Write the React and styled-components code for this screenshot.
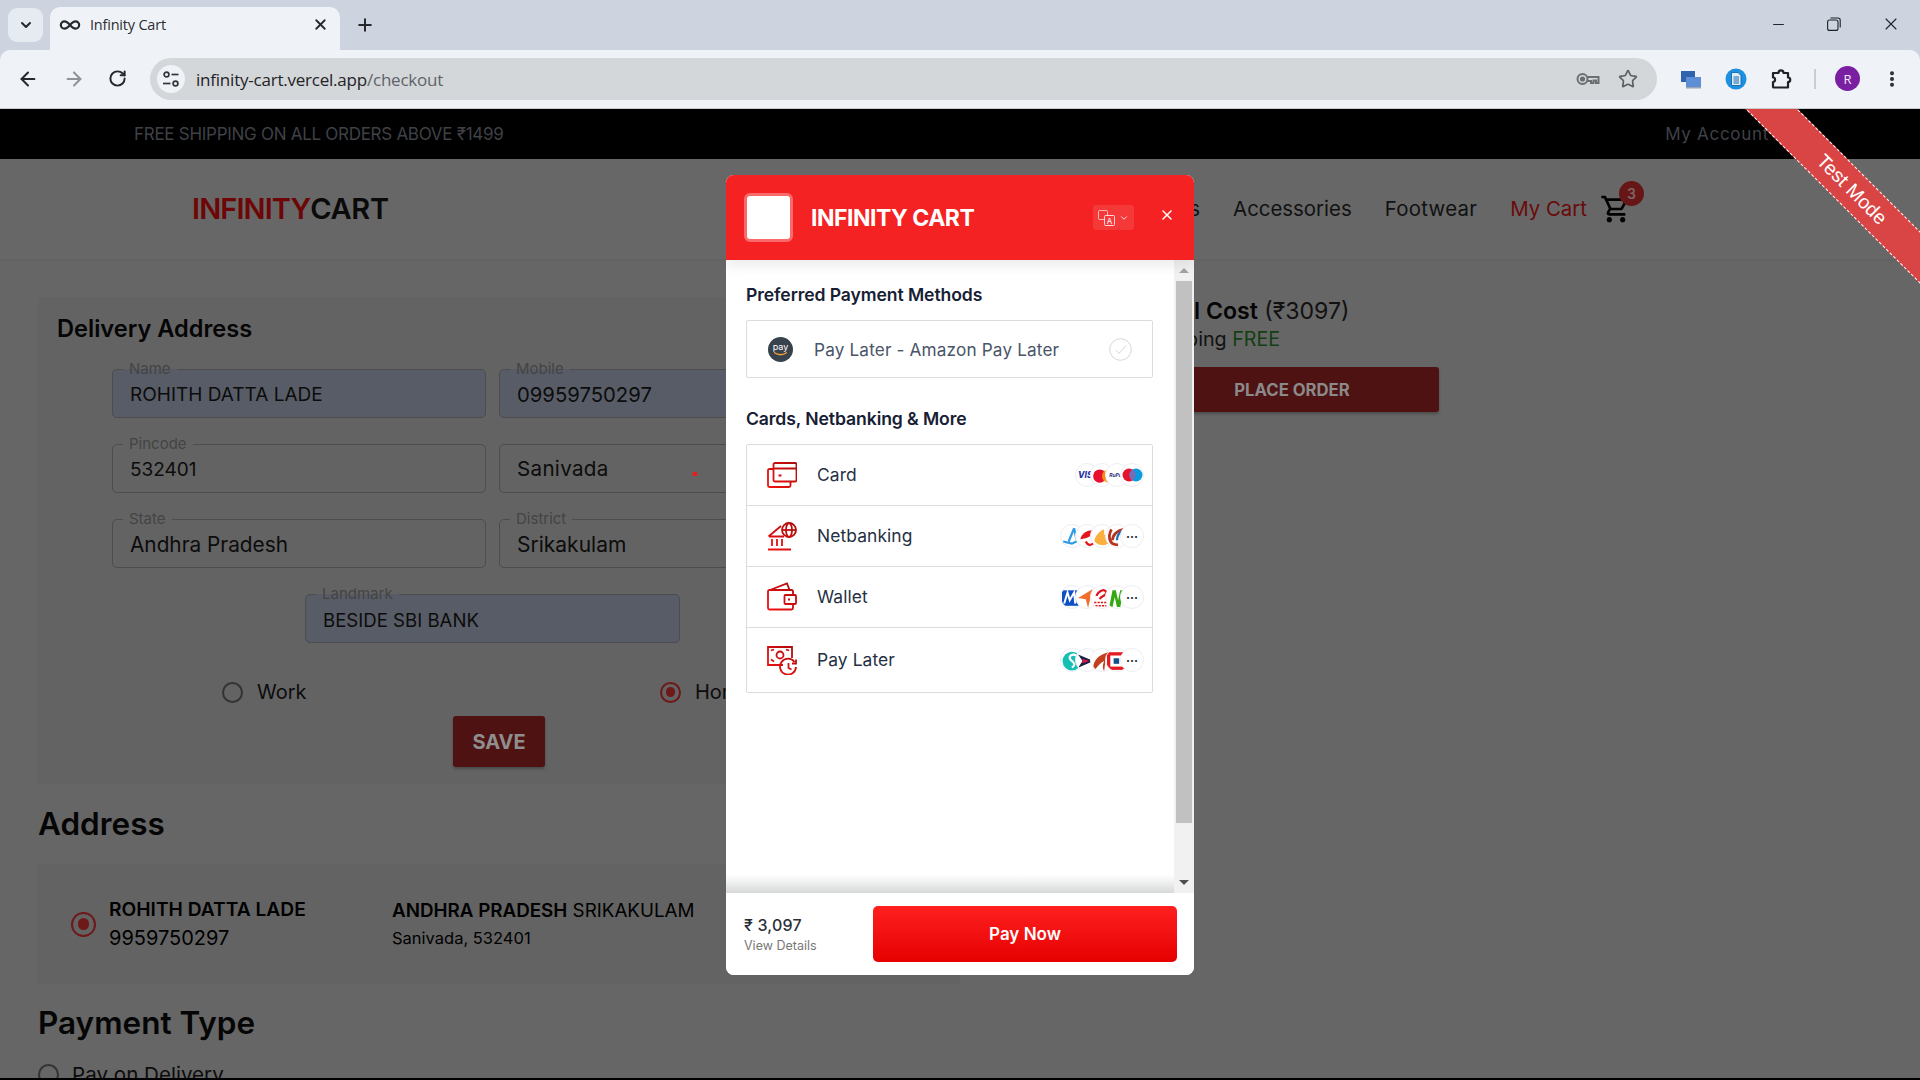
import React from 'react';
import styled, { createGlobalStyle } from 'styled-components';
import { ArrowLeft, ArrowRight, ChevronDown, Infinity as InfinityIcon, Minus, MoreVertical, Plus, RotateCw, Star, X } from 'lucide-react';
import { MdOutlineShoppingCart } from 'react-icons/md';

const GlobalStyle = createGlobalStyle`
    html, body {
        margin: 0;
        padding: 0;
        height: 1080px;
        overflow: hidden;
        background: #666;
        font-family: "Inter", "Liberation Sans", sans-serif;
    }
    * {
        box-sizing: border-box;
    }
`;

const PAGE_FONT = `"Inter", "Noto Sans", sans-serif`;
const CHROME_FONT = `"Open Sans", "Noto Sans", sans-serif`;

/* ---------- browser chrome ---------- */

const TabIcon = () => <InfinityIcon size={22} strokeWidth={2.4} color="#26282c" />;

const KeyIcon = () => (
    <svg width="24" height="14" viewBox="0 0 24 14" fill="none" stroke="#6b6e72" strokeWidth="2">
        <circle cx="6.5" cy="7" r="5" />
        <circle cx="6.5" cy="7" r="1.6" fill="#6b6e72" />
        <path d="M11.5 5h11v6h-2.5v-2.5h-2.5v2.5h-2.5v-2h-3.5" />
    </svg>
);

const TuneIcon = () => (
    <svg width="18" height="18" viewBox="0 0 18 18" fill="none" stroke="#33363a" strokeWidth="1.7">
        <circle cx="4.5" cy="4.5" r="2.4" />
        <path d="M9.5 4.5h7" />
        <circle cx="13.5" cy="13.5" r="2.4" />
        <path d="M1 13.5h7.5" />
    </svg>
);

const WindowsExt = () => (
    <svg width="22" height="22" viewBox="0 0 22 22">
        <rect x="1" y="3" width="14" height="11" fill="#2f63ad" />
        <rect x="6" y="9" width="15" height="11" fill="#5e8fd6" />
        <rect x="6" y="19" width="15" height="1.5" fill="#9aa6b5" />
    </svg>
);

const DocExt = () => (
    <svg width="22" height="22" viewBox="0 0 22 22">
        <circle cx="11" cy="11" r="10.5" fill="#1e90e0" />
        <path d="M6.5 4.5h6.5l3 3v10h-9.500z" fill="#d8ecfa" stroke="#0d5c9c" strokeWidth=".8" />
        <path d="M8.500 9h5.500M8.500 11h5.500M8.500 13h5.500M8.500 15h5.500" stroke="#0d5c9c" strokeWidth=".9" />
    </svg>
);

const PuzzleExt = () => (
    <svg width="22" height="22" viewBox="0 0 22 22" fill="none" stroke="#1f2226" strokeWidth="2.200" strokeLinejoin="round">
        <path d="M3 5h5.500c0-3.500 5-3.500 5 0H18v4.500c3 0 3 4.500 0 4.500v5.500H3.800c-.5 0-.8-.3-.8-.8V14c2.800 0 2.800-4.500 0-4.500z" />
    </svg>
);

const RestoreIcon = () => (
    <svg width="14" height="14" viewBox="0 0 14 14" fill="none" stroke="#1f2226" strokeWidth="1.100">
        <rect x=".6" y="3" width="10.400" height="10.400" rx="2" />
        <path d="M3.500 1h7.500c1.200 0 2.200 1 2.200 2.200V10.500" />
    </svg>
);

const BrowserChrome = () => (
    <ChromeFrame>
        <TabStrip>
            <TabSearch><ChevronDown size={16} strokeWidth={3} color="#26282c" /></TabSearch>
            <ActiveTab>
                <TabIcon />
                <TabTitle>Infinity Cart</TabTitle>
                <X size={17} strokeWidth={2.6} color="#26282c" />
            </ActiveTab>
            <NewTab><Plus size={20} strokeWidth={2.4} color="#26282c" /></NewTab>
            <WindowControls>
                <Minus size={17} strokeWidth={1.4} color="#1f2226" />
                <RestoreIcon />
                <X size={20} strokeWidth={1.300} color="#1f2226" />
            </WindowControls>
        </TabStrip>
        <Toolbar>
            <NavButtons>
                <ArrowLeft size={22} strokeWidth={2.200} color="#26282c" />
                <ArrowRight size={22} strokeWidth={2.200} color="#8f9398" />
                <RotateCw size={19} strokeWidth={2.500} color="#26282c" />
            </NavButtons>
            <Omnibox>
                <SiteInfo><TuneIcon /></SiteInfo>
                <UrlText>infinity-cart.vercel.app<UrlPath>/checkout</UrlPath></UrlText>
                <OmniActions>
                    <KeyIcon />
                    <Star size={20} strokeWidth={2} color="#5c5f63" />
                </OmniActions>
            </Omnibox>
            <Extensions>
                <WindowsExt />
                <DocExt />
                <PuzzleExt />
                <Separator />
                <Avatar>R</Avatar>
                <MoreVertical size={20} strokeWidth={2.800} color="#26282c" />
            </Extensions>
        </Toolbar>
    </ChromeFrame>
);

const ChromeFrame = styled.div`
    height: 109px;
    background: #cdd3df;
    font-family: ${CHROME_FONT};
    flex: none;
`;

const TabStrip = styled.div`
    height: 50px;
    display: flex;
    align-items: flex-start;
    position: relative;
`;

const TabSearch = styled.div`
    width: 35px;
    height: 34px;
    margin: 8px 0 0 8px;
    border-radius: 9px;
    background: #e6eaf1;
    display: flex;
    align-items: center;
    justify-content: center;
`;

const ActiveTab = styled.div`
    width: 290px;
    height: 43px;
    margin: 7px 0 0 7px;
    padding: 0 11px 8px 9px;
    border-radius: 10px 10px 0 0;
    background: #eff3f7;
    display: flex;
    align-items: center;
`;

const TabTitle = styled.span`
    flex: 1;
    margin-left: 9px;
    font-size: 14.5px;
    letter-spacing: -.2px;
    color: #2b2e33;
`;

const NewTab = styled.div`
    width: 30px;
    margin: 15px 0 0 10px;
    display: flex;
    justify-content: center;
`;

const WindowControls = styled.div`
    margin: 14px 0 0 auto;
    width: 150px;
    padding-right: 19px;
    display: flex;
    justify-content: space-between;
    align-items: center;
    height: 20px;
`;

const Toolbar = styled.div`
    height: 59px;
    background: #eff3f7;
    border-radius: 10px 10px 0 0;
    border-bottom: 1px solid #c9cbce;
    display: flex;
    align-items: center;
    padding-bottom: 1px;
`;

const NavButtons = styled.div`
    width: 150px;
    padding: 0 23px 0 17px;
    display: flex;
    justify-content: space-between;
    align-items: center;
`;

const Omnibox = styled.div`
    width: 1507px;
    height: 42px;
    border-radius: 21px;
    background: #d3d7da;
    display: flex;
    align-items: center;
    padding: 0 19px 0 7px;
`;

const SiteInfo = styled.div`
    width: 28px;
    height: 28px;
    border-radius: 50%;
    background: #eff3f7;
    display: flex;
    align-items: center;
    justify-content: center;
`;

const UrlText = styled.div`
    margin: 2px 0 0 11px;
    flex: 1;
    font-size: 17px;
    letter-spacing: -.22px;
    color: #1f2226;
`;

const UrlPath = styled.span`
    color: #5f6368;
`;

const OmniActions = styled.div`
    display: flex;
    align-items: center;
    gap: 18px;
`;

const Extensions = styled.div`
    flex: 1;
    display: flex;
    align-items: center;
    padding-left: 23px;
    gap: 23px;
`;

const Separator = styled.div`
    width: 2px;
    height: 20px;
    background: #c9ced6;
    margin: 0 0 0 -1px;
`;

const Avatar = styled.div`
    width: 25px;
    height: 25px;
    margin-left: -4px;
    margin-right: -1px;
    border-radius: 50%;
    background: #7b1fa2;
    color: #f2e9f6;
    font-size: 13px;
    display: flex;
    align-items: center;
    justify-content: center;
`;

/* ---------- store page behind the dialog ---------- */

const Page = styled.div`
    flex: 1;
    min-height: 0;
    position: relative;
    overflow: hidden;
    border-bottom: 2px solid #000;
    font-family: ${PAGE_FONT};
    color: #000;
`;

const PromoBar = styled.div`
    height: 50px;
    background: #000;
    color: #3f4147;
    display: flex;
    align-items: center;
    justify-content: space-between;
    padding: 0 151px 0 134px;
    font-size: 17px;
    letter-spacing: -.28px;
`;

const AccountLink = styled.span`
    letter-spacing: .7px;
`;

const SiteNav = styled.div`
    height: 100px;
    background: #676767;
    box-shadow: 0 1px 2px rgba(0, 0, 0, .06);
    display: flex;
    align-items: center;
    padding: 0 286px 0 192px;
`;

const Logo = styled.div`
    font-size: 29px;
    line-height: 34px;
    margin: -1px auto 0 0;
    font-weight: 600;
    letter-spacing: -.3px;
    color: #0a0a0a;
`;

const LogoAccent = styled.span`
    color: #6d0606;
    letter-spacing: -.9px;
`;

const NavLinks = styled.div`
    display: flex;
    align-items: center;
    gap: 33px;
    font-size: 20.4px;
    margin-top: -2px;
    color: #111;
`;

const WideLink = styled.span`
    letter-spacing: .3px;
`;

const CartLink = styled.span`
    color: #6a0a0a;
`;

const CartButton = styled.div`
    position: relative;
    margin: 2px 2px 0 -20px;
    height: 30px;
    font-size: 32px;
    color: #000;
    display: flex;
    align-items: center;
`;

const CartBadge = styled.span`
    position: absolute;
    top: -13px;
    left: 19px;
    width: 25px;
    height: 25px;
    border-radius: 50%;
    background: #661616;
    color: #7e6464;
    font-size: 14px;
    font-weight: 600;
    display: flex;
    align-items: center;
    justify-content: center;
`;

const Checkout = styled.div`
    display: grid;
    grid-template-columns: 922px 294px;
    column-gap: 185px;
    padding: 38px 0 0 38px;
`;

const LeftColumn = styled.div`
    display: flex;
    flex-direction: column;
`;

const DeliveryPanel = styled.div`
    background: #636363;
    padding: 16px 0 17px;
    height: 487px;
`;

const PanelTitle = styled.h3`
    margin: 0 0 15px 19px;
    font-size: 23.6px;
    line-height: 32px;
    font-weight: 600;
    color: #050505;
`;

const FieldGrid = styled.div`
    margin-left: 74px;
    width: 761px;
    display: grid;
    grid-template-columns: 374px 374px;
    column-gap: 13px;
    row-gap: 17px;
`;

const Field = styled.fieldset`
    margin: 0;
    padding: 0 13px 0 17px;
    min-width: 0;
    height: 58px;
    border: 1px solid #4d4d4d;
    border-radius: 5px;
    background: ${(p) => (p.$filled ? '#585c66' : 'transparent')};
    font-size: ${(p) => p.$size}px;
    line-height: 34px;
    color: #0c0c0c;
    grid-column: ${(p) => (p.$wide ? '1 / -1' : 'auto')};
    justify-self: ${(p) => (p.$wide ? 'center' : 'stretch')};
    width: ${(p) => (p.$wide ? '375px' : 'auto')};
`;

const FieldLabel = styled.legend`
    margin-left: -7px;
    padding: 0 6px 0 6px;
    font-size: 15px;
    line-height: 18px;
    color: #444;
`;

const SelectField = styled.div`
    margin-top: 9px;
    height: 49px;
    border: 1px solid #4d4d4d;
    border-radius: 5px;
    padding: 0 17px;
    font-size: 20.6px;
    letter-spacing: .3px;
    color: #0c0c0c;
    display: flex;
    align-items: center;
    position: relative;
`;

const RedDot = styled.span`
    position: absolute;
    left: 193px;
    top: 27px;
    width: 4px;
    height: 4px;
    background: #f01818;
`;

const TypeRow = styled.div`
    margin: 34px 0 0 184px;
    display: grid;
    grid-template-columns: 438px 200px;
    height: 30px;
`;

const RadioOption = styled.label`
    display: flex;
    align-items: center;
    gap: 14px;
    font-size: 20px;
    color: #0c0c0c;
`;

const RadioDot = styled.span`
    flex: none;
    width: ${(p) => p.$size || 21}px;
    height: ${(p) => p.$size || 21}px;
    border-radius: 50%;
    border: 2px solid ${(p) => (p.$on ? '#6e1818' : '#333')};
    display: flex;
    align-items: center;
    justify-content: center;
    &::after {
        content: '';
        display: ${(p) => (p.$on ? 'block' : 'none')};
        width: 55%;
        height: 55%;
        border-radius: 50%;
        background: #6e1818;
    }
`;

const SaveRow = styled.div`
    margin-top: 9px;
    display: flex;
    justify-content: center;
`;

const SaveButton = styled.button`
    width: 92px;
    height: 51px;
    border: 0;
    border-radius: 3px;
    background: #4f1212;
    box-shadow: 0 2px 3px rgba(0, 0, 0, .25);
    color: #8e8e8e;
    font-family: inherit;
    font-size: 20px;
    font-weight: 700;
`;

const SectionTitle = styled.h2`
    margin: 20px 0 20px;
    font-size: 31.5px;
    line-height: 40px;
    font-weight: 600;
    color: #050505;
`;

const AddressCard = styled.div`
    height: 120px;
    margin-bottom: -1px;
    background: #636363;
    padding-left: 33px;
    display: flex;
    align-items: center;
`;

const PersonBlock = styled.div`
    width: 283px;
    margin-left: 13px;
    font-size: 20px;
    line-height: 29px;
`;

const StrongLine = styled.div`
    font-size: 19.2px;
    font-weight: 600;
`;

const PlaceBlock = styled.div`
    font-size: 18.8px;
    line-height: 29px;
`;

const PlaceName = styled.strong`
    font-weight: 600;
`;

const PlaceDetail = styled.div`
    font-size: 16.5px;
    line-height: 27px;
`;

const PayOption = styled.div`
    display: flex;
    align-items: center;
    gap: 13px;
    font-size: 20.6px;
    height: 22px;
    margin-top: 0;
    color: #0c0c0c;
`;

const Summary = styled.div`
    padding-top: 0;
`;

const TotalLine = styled.div`
    font-size: 23.1px;
    line-height: 30px;
    margin-top: -1px;
    font-weight: 400;
    color: #111;
`;

const TotalLabel = styled.strong`
    font-weight: 600;
    color: #050505;
`;

const ShipLine = styled.div`
    font-size: 19.7px;
    line-height: 26px;
    color: #111;
`;

const FreeTag = styled.span`
    color: #143f14;
`;

const PlaceOrder = styled.button`
    margin-top: 15px;
    width: 294px;
    height: 45px;
    border: 0;
    border-radius: 3px;
    background: #4f1212;
    box-shadow: 0 2px 3px rgba(0, 0, 0, .25);
    color: #8a8a8a;
    font-family: inherit;
    font-size: 16.7px;
    font-weight: 700;
`;

/* ---------- test ribbon ---------- */

const Ribbon = styled.div`
    position: absolute;
    left: 1702px;
    top: 62px;
    width: 300px;
    height: 37px;
    background: #d94545;
    border-top: 1px dashed #fff;
    border-bottom: 1px dashed #fff;
    transform: rotate(45deg);
    color: #fff;
    font-family: "Liberation Sans", sans-serif;
    font-size: 19.5px;
    display: flex;
    align-items: center;
    justify-content: center;
`;

/* ---------- payment dialog ---------- */

const Dialog = styled.div`
    position: absolute;
    left: 726px;
    top: 66px;
    width: 468px;
    height: 800px;
    border-radius: 8px;
    overflow: hidden;
    background: #fff;
    display: flex;
    flex-direction: column;
    font-family: "Inter", sans-serif;
`;

const DialogHeader = styled.div`
    height: 85px;
    flex: none;
    position: relative;
    z-index: 2;
    background: #f42222;
    box-shadow: 0 6px 12px rgba(0, 0, 0, .08);
    display: flex;
    align-items: center;
    padding: 0 19px 0 18px;
    color: #fff;
`;

const MerchantLogo = styled.div`
    width: 49px;
    height: 49px;
    background: #fff;
    border: 3px solid #fb6a6a;
    border-radius: 6px;
`;

const MerchantName = styled.div`
    margin-left: 18px;
    flex: 1;
    font-size: 23px;
    font-weight: 700;
    letter-spacing: -.5px;
`;

const LangButton = styled.div`
    width: 41px;
    height: 25px;
    margin: 0 2px 0 0;
    border-radius: 3px;
    background: rgba(255, 255, 255, .1);
    display: flex;
    align-items: center;
    justify-content: center;
    gap: 4px;
`;

const CloseButton = styled.div`
    margin: -5px 0 0 23px;
    display: flex;
`;

const DialogBody = styled.div`
    flex: 1;
    min-height: 0;
    display: flex;
    position: relative;
`;

const BodyFade = styled.div`
    position: absolute;
    left: 0;
    right: 0;
    bottom: 0;
    height: 18px;
    background: linear-gradient(rgba(208, 210, 210, 0), rgba(208, 210, 210, .85));
    pointer-events: none;
`;

const MethodList = styled.div`
    flex: 1;
    padding: 23px 21px 0 20px;
`;

const MethodHeading = styled.div`
    font-size: 17.6px;
    line-height: 24px;
    font-weight: 600;
    color: #172033;
    letter-spacing: -.1px;
    margin-bottom: ${(p) => p.$gap || 13}px;
`;

const PreferredBox = styled.div`
    height: 58px;
    border: 1px solid #dcdcdc;
    border-radius: 2px;
    display: flex;
    align-items: center;
    padding: 0 20px 0 21px;
    margin-bottom: 29px;
`;

const PreferredText = styled.div`
    flex: 1;
    margin-left: 21px;
    font-size: 17.2px;
    letter-spacing: .15px;
    color: #4a5568;
`;

const MethodBox = styled.div`
    border: 1px solid #dcdcdc;
    border-radius: 2px;
`;

const MethodRow = styled.div`
    height: ${(p) => p.$height || 61}px;
    display: flex;
    align-items: center;
    padding: 0 8px 0 20px;
    & + & {
        border-top: 1px solid #dcdcdc;
    }
`;

const MethodIcon = styled.div`
    width: 30px;
    height: 30px;
    flex: none;
`;

const MethodName = styled.div`
    margin: -1px 0 0 20px;
    flex: 1;
    font-size: 17.4px;
    letter-spacing: .1px;
    color: #263043;
`;

const LogoStack = styled.div`
    display: flex;
`;

const LogoChip = styled.div`
    flex: none;
    width: 24px;
    height: 24px;
    border-radius: 50%;
    background: #fff;
    border: 1px solid #eceef2;
    overflow: hidden;
    display: flex;
    align-items: center;
    justify-content: ${(p) => (p.$center ? 'center' : 'flex-start')};
    padding-left: ${(p) => (p.$center ? 0 : 1)}px;
    font-size: 7px;
    font-weight: 700;
    color: #1a2a8c;
    & + & {
        margin-left: -9px;
    }
`;

const MoreChip = styled(LogoChip)`
    color: #1e2a3a;
    font-size: 12px;
    letter-spacing: 0;
`;

const VisaMark = styled.span`
    font-style: italic;
    font-size: 8.500px;
    font-weight: 800;
    color: #2a35a8;
    margin-left: 1px;
`;

const RuPayMark = styled.span`
    font-style: italic;
    font-size: 5px;
    color: #2d2f7a;
`;

const ScrollTrack = styled.div`
    width: 20px;
    flex: none;
    background: #f1f1f1;
    display: flex;
    flex-direction: column;
    align-items: center;
    padding: 8px 0 8px;
    position: relative;
    z-index: 1;
`;

const ScrollArrow = styled.span`
    width: 0;
    height: 0;
    border-left: 5px solid transparent;
    border-right: 5px solid transparent;
    ${(p) => (p.$down ? 'border-top: 5px solid #505050;' : 'border-bottom: 5px solid #a3a3a3;')}
`;

const ScrollThumb = styled.div`
    width: 16px;
    height: 542px;
    margin: 8px 0 auto;
    background: #c1c1c1;
`;

const DialogFooter = styled.div`
    height: 82px;
    flex: none;
    background: #fff;
    display: flex;
    align-items: center;
    padding: 3px 17px 0 18px;
`;

const PriceBlock = styled.div`
    width: 129px;
`;

const Price = styled.div`
    font-size: 16px;
    line-height: 20px;
    font-weight: 500;
    letter-spacing: .2px;
    color: #2a2e36;
`;

const ViewDetails = styled.div`
    margin-top: 1px;
    font-size: 12.500px;
    line-height: 20px;
    color: #777;
`;

const PayButton = styled.button`
    flex: 1;
    height: 56px;
    margin-top: -3px;
    border: 0;
    border-radius: 5px;
    background: linear-gradient(#ff2020, #e60000);
    color: #fff;
    font-family: inherit;
    font-size: 17px;
    font-weight: 600;
`;

const AmazonPayIcon = () => (
    <svg width="25" height="25" viewBox="0 0 25 25">
        <circle cx="12.500" cy="12.500" r="12.500" fill="#37424d" />
        <text x="12.500" y="13" textAnchor="middle" fontSize="9" fontFamily="Inter, sans-serif" fill="#fff">pay</text>
        <path d="M6 15.500c4 2.800 9 2.800 13 0" fill="none" stroke="#f4a134" strokeWidth="1.300" />
    </svg>
);

const CheckCircle = () => (
    <svg width="23" height="23" viewBox="0 0 23 23" fill="none" stroke="#d6d6d6">
        <circle cx="11.500" cy="11.500" r="10.800" />
        <path d="M6.500 12l3.500 3.500 7-8" />
    </svg>
);

const LangIcon = () => (
    <svg width="17" height="16" viewBox="0 0 17 16" fill="none" stroke="#fff" strokeWidth=".8">
        <rect x=".5" y=".5" width="9" height="9" rx="1" opacity=".8" />
        <rect x="6.500" y="5.500" width="10" height="10" rx="1" fill="#f43c3c" />
        <text x="11.500" y="13.500" textAnchor="middle" fontSize="8" fill="#fff" stroke="none" fontFamily="Inter, sans-serif">A</text>
    </svg>
);

const iconGradient = (id) => (
    <defs>
        <linearGradient id={id} gradientUnits="userSpaceOnUse" x1="30" y1="0" x2="0" y2="30">
            <stop offset="0" stopColor="#a80b0b" />
            <stop offset="1" stopColor="#f71212" />
        </linearGradient>
    </defs>
);

const CardIcon = () => (
    <svg width="30" height="30" viewBox="0 0 30 30" fill="none" stroke="url(#gCard)" strokeWidth="1.800">
        {iconGradient('gCard')}
        <rect x="6.500" y="3" width="23" height="18.500" rx="1.500" />
        <path d="M6.500 8.500h23M11.500 15.500h3" />
        <path d="M6.500 9H2.500C1.500 9 1 9.500 1 10.500v15c0 1 .5 1.500 1.500 1.500H22c1 0 1.500-.5 1.500-1.500v-4" />
    </svg>
);

const BankIcon = () => (
    <svg width="30" height="30" viewBox="0 0 30 30" fill="none" stroke="url(#gBank)" strokeWidth="1.800">
        {iconGradient('gBank')}
        <circle cx="22" cy="9" r="7" />
        <ellipse cx="22" cy="9" rx="3" ry="7" />
        <path d="M15 9h14" />
        <path d="M1.500 15.500L14 5M2 15.500h15M5 18v7M10 18v7M15 18v7M1 28.500h23" />
    </svg>
);

const WalletIcon = () => (
    <svg width="30" height="30" viewBox="0 0 30 30" fill="none" stroke="url(#gWallet)" strokeWidth="1.800">
        {iconGradient('gWallet')}
        <path d="M26 13V9.500c0-1-.5-1.500-1.500-1.500h-22C1.500 8 1 8.500 1 9.500V26c0 1 .5 1.500 1.500 1.500h22c1 0 1.500-.5 1.500-1.500v-4" />
        <path d="M3 8L20 1.500 22.500 8" />
        <rect x="17.500" y="13" width="11.500" height="9" rx="1" />
        <path d="M21 17.500h2" />
    </svg>
);

const PayLaterIcon = () => (
    <svg width="30" height="30" viewBox="0 0 30 30" fill="none" stroke="url(#gLater)" strokeWidth="1.800">
        {iconGradient('gLater')}
        <path d="M16 20H1V2h24v11" />
        <circle cx="13" cy="10" r="3.500" />
        <path d="M4 5.500l3-1M4 14.500l3 2M22 5.500l-3-1" />
        <path d="M27.500 17a8 8 0 1 0 1.500 5" />
        <path d="M21.500 18v5l3 1.500M29 14.500v4h-4" />
    </svg>
);

const mark = (children) => (
    <svg width="21" height="21" viewBox="1 1 19 19" style={{ flex: 'none' }}>{children}</svg>
);

const CARD_LOGOS = [
    { node: <VisaMark>VIS</VisaMark> },
    { node: mark(<><circle cx="8" cy="11" r="6" fill="#e8112d" /><circle cx="16" cy="11" r="6" fill="#f79e1b" opacity=".85" /></>) },
    { node: <RuPayMark>RuPay</RuPayMark>, center: true },
    { node: <svg width="22" height="22" viewBox="0 0 22 22"><circle cx="8" cy="11" r="6.500" fill="#e8112d" /><circle cx="15" cy="11" r="6.500" fill="#0a9ade" /><path d="M11.500 5.500a6.500 6.500 0 0 1 0 11 6.500 6.500 0 0 1 0-11z" fill="#7a6ab8" /></svg>, center: true },
];

const BANK_LOGOS = [
    { node: mark(<path d="M2 15l8 2 8-4M12 3L7 15M12 3l2 10" fill="none" stroke="#2f9be6" strokeWidth="2" />) },
    { node: mark(<><path d="M4 13c1-6 8-9 13-8-2 5-6 7-13 8z" fill="#e5151d" /><path d="M9 15c2 4 5 4 7 1" fill="none" stroke="#e5151d" strokeWidth="2" /></>) },
    { node: mark(<path d="M3 14c2-6 6-9 9-10v5c4-1 6 3 4 7s-11 3-13-2z" fill="#fbb040" />) },
    { node: mark(<><path d="M5 4c-3 6-3 14 6 14M6 14c0-5 4-9 10-10" fill="none" stroke="#b8321f" strokeWidth="2.500" /><path d="M10 14c0-5 3-8 7-9" fill="none" stroke="#1a6fb5" strokeWidth="2" /></>) },
];

const WALLET_LOGOS = [
    { node: mark(<><rect x="0" y="4" width="16" height="14" fill="#0c4fc7" /><path d="M3 16l3-10 2 7 4-7 1 10" fill="none" stroke="#fff" strokeWidth="1.800" /></>) },
    { node: mark(<path d="M15 3L2 11l7 1 2 8z" fill="#f26c2b" />) },
    { node: mark(<><path d="M5 9c2-5 8-7 9-3 0 3-5 3-6 6" fill="none" stroke="#e0141e" strokeWidth="2" /><path d="M3 15h12M4 18h10" stroke="#e0141e" strokeWidth="1.500" strokeDasharray="2 1" /></>) },
    { node: mark(<path d="M3 19L6 4h3l2 9 2-9h3l-3 15h-3l-2-9-2 9z" fill="#35a80f" />) },
];

const LATER_LOGOS = [
    { node: mark(<><circle cx="10" cy="11" r="8.500" fill="#16bfb4" /><path d="M14 6c-4-2-8 1-5 4s5 4 1 7" fill="none" stroke="#fff" strokeWidth="2" /></>) },
    { node: mark(<><path d="M2 5l14 6-14 6 4-6z" fill="#1c2340" /><path d="M6 9l6 2-6 2z" fill="#e2124f" /></>) },
    { node: mark(<path d="M3 20c-3-7 3-15 13-17-1 5-3 6-3 9l-1 8c-2-3-1-6 0-9-4 2-6 5-9 9z" fill="#c2411c" />) },
    { node: mark(<><rect x="1" y="3" width="18" height="16" fill="#e41b23" /><rect x="4" y="6" width="12" height="10" fill="#fff" /><rect x="7" y="8.500" width="5" height="5" fill="#12508c" /></>) },
];

const Chips = ({ logos, more }) => (
    <LogoStack>
        {logos.map((logo, i) => <LogoChip key={i} $center={logo.center}>{logo.node}</LogoChip>)}
        {more && <MoreChip $center>···</MoreChip>}
    </LogoStack>
);

const METHODS = [
    { name: 'Card', Icon: CardIcon, logos: CARD_LOGOS, height: 60 },
    { name: 'Netbanking', Icon: BankIcon, logos: BANK_LOGOS, more: true },
    { name: 'Wallet', Icon: WalletIcon, logos: WALLET_LOGOS, more: true },
    { name: 'Pay Later', Icon: PayLaterIcon, logos: LATER_LOGOS, more: true, height: 65 },
];

const PaymentDialog = () => (
    <Dialog>
        <DialogHeader>
            <MerchantLogo />
            <MerchantName>INFINITY CART</MerchantName>
            <LangButton>
                <LangIcon />
                <ChevronDown size={10} color="#fff" />
            </LangButton>
            <CloseButton><X size={16} strokeWidth={2.200} color="#fff" /></CloseButton>
        </DialogHeader>
        <DialogBody>
            <MethodList>
                <MethodHeading>Preferred Payment Methods</MethodHeading>
                <PreferredBox>
                    <AmazonPayIcon />
                    <PreferredText>Pay Later - Amazon Pay Later</PreferredText>
                    <CheckCircle />
                </PreferredBox>
                <MethodHeading>Cards, Netbanking &amp; More</MethodHeading>
                <MethodBox>
                    {METHODS.map(({ name, Icon, logos, more, height }) => (
                        <MethodRow key={name} $height={height}>
                            <MethodIcon><Icon /></MethodIcon>
                            <MethodName>{name}</MethodName>
                            <Chips logos={logos} more={more} />
                        </MethodRow>
                    ))}
                </MethodBox>
            </MethodList>
            <ScrollTrack>
                <ScrollArrow />
                <ScrollThumb />
                <ScrollArrow $down />
            </ScrollTrack>
            <BodyFade />
        </DialogBody>
        <DialogFooter>
            <PriceBlock>
                <Price>₹ 3,097</Price>
                <ViewDetails>View Details</ViewDetails>
            </PriceBlock>
            <PayButton>Pay Now</PayButton>
        </DialogFooter>
    </Dialog>
);

const Shell = styled.div`
    width: 1920px;
    height: 1080px;
    display: flex;
    flex-direction: column;
    overflow: hidden;
`;

const App = () => (
    <Shell>
        <GlobalStyle />
        <BrowserChrome />
        <Page>
            <PromoBar>
                <span>FREE SHIPPING ON ALL ORDERS ABOVE ₹1499</span>
                <AccountLink>My Account</AccountLink>
            </PromoBar>
            <SiteNav>
                <Logo><LogoAccent>INFINITY</LogoAccent>CART</Logo>
                <NavLinks>
                    <span>Clothes</span>
                    <span>Accessories</span>
                    <WideLink>Footwear</WideLink>
                    <CartLink>My Cart</CartLink>
                    <CartButton>
                        <MdOutlineShoppingCart />
                        <CartBadge>3</CartBadge>
                    </CartButton>
                </NavLinks>
            </SiteNav>
            <Checkout>
                <LeftColumn>
                    <DeliveryPanel>
                        <PanelTitle>Delivery Address</PanelTitle>
                        <FieldGrid>
                            <Field $filled $size={19}><FieldLabel>Name</FieldLabel>ROHITH DATTA LADE</Field>
                            <Field $filled $size={20.3}><FieldLabel>Mobile</FieldLabel>09959750297</Field>
                            <Field $size={19}><FieldLabel>Pincode</FieldLabel>532401</Field>
                            <SelectField>Sanivada<RedDot /></SelectField>
                            <Field $size={20.8}><FieldLabel>State</FieldLabel>Andhra Pradesh</Field>
                            <Field $size={21}><FieldLabel>District</FieldLabel>Srikakulam</Field>
                            <Field $filled $wide $size={18.6}><FieldLabel>Landmark</FieldLabel>BESIDE SBI BANK</Field>
                        </FieldGrid>
                        <TypeRow>
                            <RadioOption><RadioDot />Work</RadioOption>
                            <RadioOption><RadioDot $on />Home</RadioOption>
                        </TypeRow>
                        <SaveRow><SaveButton>SAVE</SaveButton></SaveRow>
                    </DeliveryPanel>
                    <SectionTitle>Address</SectionTitle>
                    <AddressCard>
                        <RadioDot $on $size={25} />
                        <PersonBlock>
                            <StrongLine>ROHITH DATTA LADE</StrongLine>
                            <div>9959750297</div>
                        </PersonBlock>
                        <PlaceBlock>
                            <div><PlaceName>ANDHRA PRADESH</PlaceName> SRIKAKULAM</div>
                            <PlaceDetail>Sanivada, 532401</PlaceDetail>
                        </PlaceBlock>
                    </AddressCard>
                    <SectionTitle>Payment Type</SectionTitle>
                    <PayOption><RadioDot />Pay on Delivery</PayOption>
                </LeftColumn>
                <Summary>
                    <TotalLine><TotalLabel>Total Cost</TotalLabel> (₹3097)</TotalLine>
                    <ShipLine>Shipping <FreeTag>FREE</FreeTag></ShipLine>
                    <PlaceOrder>PLACE ORDER</PlaceOrder>
                </Summary>
            </Checkout>
            <Ribbon>Test Mode</Ribbon>
            <PaymentDialog />
        </Page>
    </Shell>
);

export default App;
